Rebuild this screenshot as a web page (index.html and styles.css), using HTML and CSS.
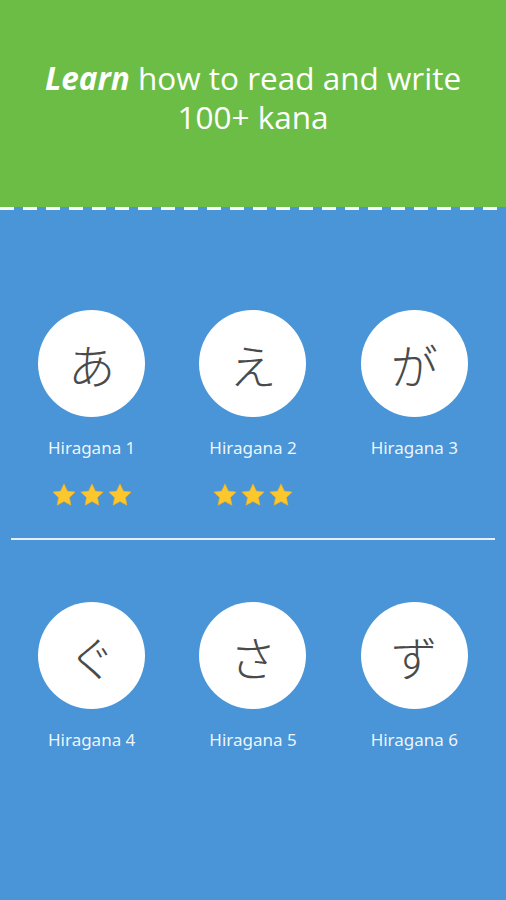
FILE: index.html
```html
<!DOCTYPE html>
<html lang="en">
<head>
<meta charset="utf-8">
<link rel="stylesheet" href="styles.css">
</head>
<body>
<div class="page">
  <header class="hero">
    <h1 class="hero-title"><b>Learn</b> how to read and write<br>100+ kana</h1>
  </header>
  <div class="dashes"></div>
  <main class="lessons">
    <div class="row row-first">
      <div class="tile">
        <div class="circle">あ</div>
        <div class="label">Hiragana 1</div>
        <div class="stars">
          <svg class="star" viewBox="0 0 24 24"><path d="M12 1.8l3.1 6.6 7.2.9-5.3 5 1.4 7.1L12 17.9l-6.4 3.5 1.4-7.1-5.3-5 7.2-.9z"/></svg>
          <svg class="star" viewBox="0 0 24 24"><path d="M12 1.8l3.1 6.6 7.2.9-5.3 5 1.4 7.1L12 17.9l-6.4 3.5 1.4-7.1-5.3-5 7.2-.9z"/></svg>
          <svg class="star" viewBox="0 0 24 24"><path d="M12 1.8l3.1 6.6 7.2.9-5.3 5 1.4 7.1L12 17.9l-6.4 3.5 1.4-7.1-5.3-5 7.2-.9z"/></svg>
        </div>
      </div>
      <div class="tile">
        <div class="circle">え</div>
        <div class="label">Hiragana 2</div>
        <div class="stars">
          <svg class="star" viewBox="0 0 24 24"><path d="M12 1.8l3.1 6.6 7.2.9-5.3 5 1.4 7.1L12 17.9l-6.4 3.5 1.4-7.1-5.3-5 7.2-.9z"/></svg>
          <svg class="star" viewBox="0 0 24 24"><path d="M12 1.8l3.1 6.6 7.2.9-5.3 5 1.4 7.1L12 17.9l-6.4 3.5 1.4-7.1-5.3-5 7.2-.9z"/></svg>
          <svg class="star" viewBox="0 0 24 24"><path d="M12 1.8l3.1 6.6 7.2.9-5.3 5 1.4 7.1L12 17.9l-6.4 3.5 1.4-7.1-5.3-5 7.2-.9z"/></svg>
        </div>
      </div>
      <div class="tile">
        <div class="circle">が</div>
        <div class="label">Hiragana 3</div>
        <div class="stars"></div>
      </div>
    </div>
    <div class="divider"></div>
    <div class="row row-second">
      <div class="tile">
        <div class="circle">ぐ</div>
        <div class="label">Hiragana 4</div>
      </div>
      <div class="tile">
        <div class="circle">さ</div>
        <div class="label">Hiragana 5</div>
      </div>
      <div class="tile">
        <div class="circle">ず</div>
        <div class="label">Hiragana 6</div>
      </div>
    </div>
  </main>
</div>
</body>
</html>
```
FILE: styles.css
```css
* { box-sizing: border-box; }
html, body { margin: 0; padding: 0; }
body {
  width: 506px;
  height: 900px;
  overflow: hidden;
  background: #4995d7;
  font-family: "Open Sans", "Noto Sans", sans-serif;
}
.page {
  display: flex;
  flex-direction: column;
  height: 900px;
}
.hero {
  background: #6cbd45;
  height: 207px;
  padding-top: 58px;
}
.hero-title {
  margin: 0;
  color: #fff;
  font-weight: 400;
  font-size: 31.5px;
  line-height: 39px;
  text-align: center;
}
.hero-title b {
  font-weight: 700;
  font-style: italic;
}
.dashes {
  height: 3px;
  background: repeating-linear-gradient(90deg, #ffffff 0 14px, transparent 14px 23px);
  opacity: 0.95;
}
.lessons {
  flex: 1;
  padding: 100px 11px 0;
  display: flex;
  flex-direction: column;
}
.row {
  display: grid;
  grid-template-columns: repeat(3, 1fr);
}
.tile {
  display: flex;
  flex-direction: column;
  align-items: center;
}
.circle {
  width: 107px;
  height: 107px;
  border-radius: 50%;
  background: #fff;
  display: flex;
  align-items: center;
  justify-content: center;
  font-family: "Noto Sans CJK JP", sans-serif;
  font-weight: 300;
  font-size: 47px;
  color: #4a4a4a;
}
.label {
  margin-top: 20px;
  font-family: "Noto Sans", "Open Sans", sans-serif;
  font-size: 17px;
  line-height: 22px;
  color: rgba(255, 255, 255, 0.92);
}
.stars {
  margin-top: 23px;
  height: 26px;
  display: flex;
  gap: 2px;
}
.star {
  width: 26px;
  height: 26px;
  fill: #fcc62d;
  stroke: #f0b020;
  stroke-width: 0.6;
  stroke-linejoin: round;
}
.divider {
  margin-top: 30px;
  height: 2px;
  background: rgba(255, 255, 255, 0.85);
}
.row-second {
  margin-top: 62px;
}
```
